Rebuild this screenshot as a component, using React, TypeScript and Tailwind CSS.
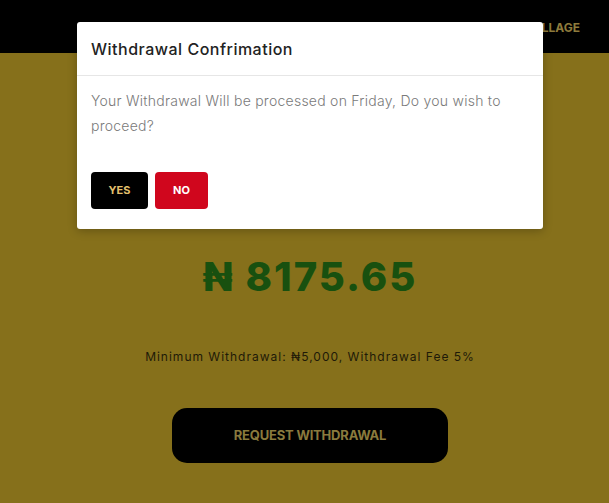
import React from 'react';

const navItems = ['HOME', 'WALLET', 'REFERRALS', 'ACCOUNT', 'VILLAGE'];

function WithdrawalModal() {
  return (
    <div className="absolute left-[77px] top-[22px] w-[466px] rounded-[3px] bg-white shadow-[0_2px_10px_rgba(0,0,0,0.25)]">
      <div className="border-b border-[#e6e6e6] px-[14px] pb-[14px] pt-[15px]">
        <h3 className="text-[16px] font-medium tracking-[0.5px] text-[#222]">Withdrawal Confrimation</h3>
      </div>
      <div className="px-[14px] pb-[20px] pt-[12px]">
        <p className="text-[14px] font-light leading-[25px] tracking-[0.25px] text-[#7a7a7a]">
          Your Withdrawal Will be processed on Friday, Do you wish to proceed?
        </p>
        <div className="mt-[34px] flex gap-[7px]">
          <button className="h-[37px] w-[57px] rounded-[4px] bg-black text-[11px] font-bold text-[#e3c06d]">YES</button>
          <button className="h-[37px] w-[53px] rounded-[4px] bg-[#d0061d] text-[11px] font-bold text-white">NO</button>
        </div>
      </div>
    </div>
  );
}

export default function App() {
  return (
    <div className="relative h-[503px] w-[609px] overflow-hidden bg-[#86701b] font-['Inter',sans-serif]">
      <header className="flex h-[53px] items-center justify-end gap-[40px] bg-black pr-[29px] pt-[2px]">
        {navItems.map((item) => (
          <span key={item} className="text-[12px] font-bold text-[#8e7b3c]">{item}</span>
        ))}
      </header>
      <main className="flex flex-col items-center pl-[11px]">
        <div className="mt-[200px] text-[40px] font-extrabold leading-[48px] tracking-[2px] text-[#18500f]">₦ 8175.65</div>
        <p className="mt-[47px] text-[12px] tracking-[1px] text-[#1e1a08]">Minimum Withdrawal: ₦5,000, Withdrawal Fee 5%</p>
        <button className="mt-[42px] h-[55px] w-[276px] rounded-[15px] bg-black text-[13px] font-bold tracking-[-0.2px] text-[#8a7a3d]">
          REQUEST WITHDRAWAL
        </button>
      </main>
      <WithdrawalModal />
    </div>
  );
}
